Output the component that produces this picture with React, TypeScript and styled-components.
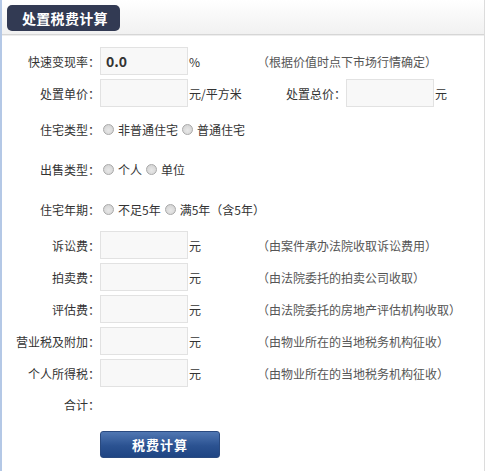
import React, { useState } from 'react';
import styled, { createGlobalStyle } from 'styled-components';

const GlobalStyle = createGlobalStyle`
  html, body {
    margin: 0;
    padding: 0;
    background: #fff;
  }
  body {
    font-family: "Noto Sans CJK SC", "Liberation Sans", sans-serif;
    font-size: 12px;
    color: #333;
  }
`;

const fees = [
  { label: '诉讼费：', hint: '（由案件承办法院收取诉讼费用）' },
  { label: '拍卖费：', hint: '（由法院委托的拍卖公司收取）' },
  { label: '评估费：', hint: '（由法院委托的房地产评估机构收取）' },
  { label: '营业税及附加：', hint: '（由物业所在的当地税务机构征收）' },
  { label: '个人所得税：', hint: '（由物业所在的当地税务机构征收）' },
];

const choices = [
  { label: '住宅类型：', name: 'house', options: ['非普通住宅', '普通住宅'], height: 40 },
  { label: '出售类型：', name: 'seller', options: ['个人', '单位'], height: 40 },
  { label: '住宅年期：', name: 'years', options: ['不足5年', '满5年（含5年）'], height: 40 },
];

export default function App() {
  const [rate, setRate] = useState('0.0');

  return (
    <Panel>
      <GlobalStyle />
      <Header>
        <Tab>处置税费计算</Tab>
      </Header>
      <Form>
        <Row $height={32}>
          <Label>快速变现率：</Label>
          <Field $bold value={rate} onChange={e => setRate(e.target.value)} />
          <Unit>%</Unit>
          <Hint>（根据价值时点下市场行情确定）</Hint>
        </Row>
        <Row $height={32}>
          <Label>处置单价：</Label>
          <Field />
          <Unit>元/平方米</Unit>
          <Label $width={89}>处置总价：</Label>
          <Field />
          <Unit>元</Unit>
        </Row>
        {choices.map(c => (
          <Row key={c.name} $height={c.height}>
            <Label>{c.label}</Label>
            <Options>
              {c.options.map(o => (
                <Option key={o}>
                  <Radio type="radio" name={c.name} />
                  {o}
                </Option>
              ))}
            </Options>
          </Row>
        ))}
        {fees.map(f => (
          <Row key={f.label} $height={32}>
            <Label>{f.label}</Label>
            <Field />
            <Unit>元</Unit>
            <Hint>{f.hint}</Hint>
          </Row>
        ))}
        <Row $height={30}>
          <Label>合计：</Label>
        </Row>
        <Actions>
          <Button type="button">税费计算</Button>
        </Actions>
      </Form>
    </Panel>
  );
}

const Panel = styled.div`
  box-sizing: border-box;
  width: 485px;
  height: 471px;
  border-left: 2px solid #b4c8e6;
  border-right: 1px solid #dcdcdc;
  background: #fff;
`;

const Header = styled.div`
  box-sizing: border-box;
  height: 35px;
  padding: 5px 0 0 5px;
  background: linear-gradient(#ffffff, #f1f1f1);
  border-bottom: 1px solid #d6d6d6;
  box-shadow: 0 1px 0 #eeeeee;
`;

const Tab = styled.div`
  display: inline-flex;
  align-items: center;
  height: 26px;
  padding: 0 12px 0 15px;
  border-radius: 5px;
  background: #323a53;
  color: #fff;
  font-size: 14px;
  font-weight: bold;
  letter-spacing: 0.3px;
`;

const Form = styled.div`
  padding-top: 10px;
`;

const Row = styled.div<{ $height: number }>`
  display: flex;
  align-items: center;
  height: ${p => p.$height}px;
`;

const Label = styled.div<{ $width?: number }>`
  width: ${p => p.$width ?? 98}px;
  flex-shrink: 0;
  text-align: right;
  white-space: nowrap;
`;

const Field = styled.input<{ $bold?: boolean }>`
  box-sizing: border-box;
  width: 88px;
  height: 28px;
  margin: 0;
  padding: 0 5px;
  border: 1px solid #e2e2e2;
  background: #f8f8f8;
  font-family: inherit;
  font-size: 14px;
  font-weight: ${p => (p.$bold ? 'bold' : 'normal')};
  color: #333;
  outline: none;
`;

const Unit = styled.div`
  width: 68px;
  flex-shrink: 0;
  padding-left: 1px;
  white-space: nowrap;
`;

const Hint = styled.div`
  color: #555;
  white-space: nowrap;
`;

const Options = styled.div`
  display: flex;
  align-items: center;
  gap: 4px;
  padding-left: 3px;
`;

const Option = styled.label`
  display: inline-flex;
  align-items: center;
  white-space: nowrap;
`;

const Radio = styled.input`
  appearance: none;
  box-sizing: border-box;
  width: 11px;
  height: 11px;
  margin: 0 4px 0 0;
  border-radius: 50%;
  border: 1px solid #a9a9a9;
  background: radial-gradient(circle at 50% 60%, #e8e8e8 0%, #cfcfcf 100%);
  &:checked {
    background: radial-gradient(circle, #555 0 2px, #e4e4e4 3px);
  }
`;

const Actions = styled.div`
  padding: 12px 0 0 98px;
`;

const Button = styled.button`
  width: 120px;
  height: 27px;
  border: 1px solid #2a4a80;
  border-radius: 3px;
  background: linear-gradient(#5077b3, #2b5291 55%, #1f4583);
  color: #fff;
  font-family: inherit;
  font-size: 13px;
  font-weight: bold;
  letter-spacing: 1px;
  cursor: pointer;
`;
